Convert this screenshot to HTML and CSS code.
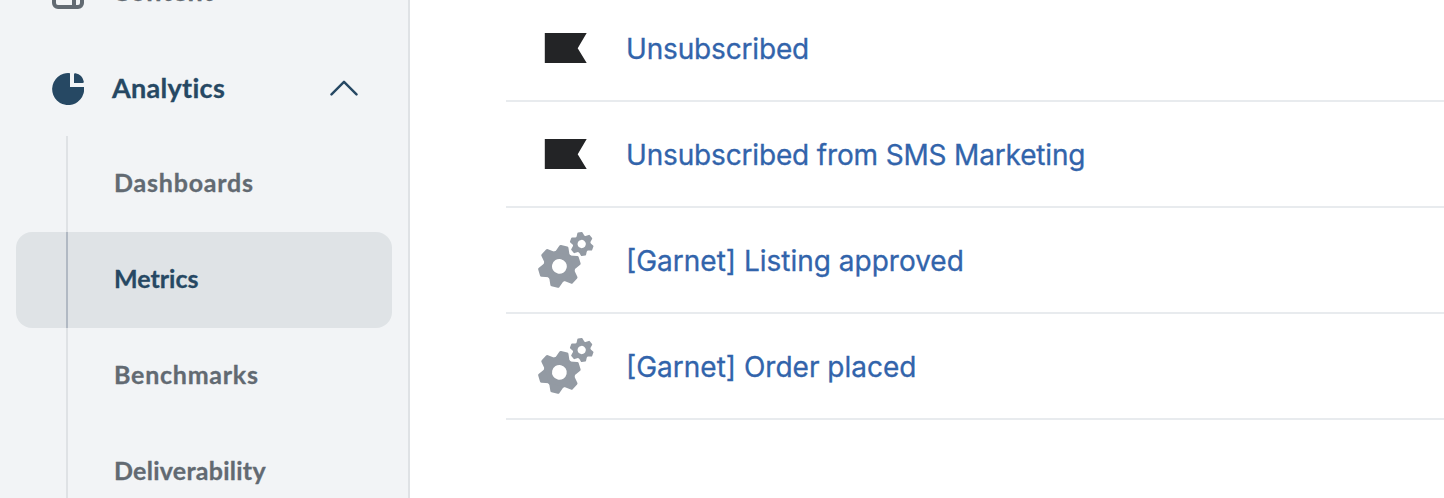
FILE: index.html
```
<!DOCTYPE html>
<html lang="en">
<head>
    <meta charset="UTF-8">
    <meta name="viewport" content="width=device-width, initial-scale=1.0">
    <title>Metrics</title>
    <link rel="stylesheet" href="styles.css">
</head>
<body>
    <!-- Shared icons -->
    <svg class="icon-defs" width="0" height="0">
        <symbol id="flag" viewBox="0 0 60 60">
            <path d="M8.8 15h41.9l-9 15.2 9 14.8H8.8z" fill="#232426"/>
        </symbol>
        <symbol id="gears" viewBox="0 0 60 60">
            <defs>
                <path id="tooth" d="M-7.5-13L-4.7-20Q-4.4-21.2-3.2-21.2H3.2Q4.4-21.2 4.7-20L7.5-13z"/>
                <g id="gear">
                    <circle r="11.6" fill="none" stroke="#939aa3" stroke-width="8.4"/>
                    <use href="#tooth"/>
                    <use href="#tooth" transform="rotate(60)"/>
                    <use href="#tooth" transform="rotate(120)"/>
                    <use href="#tooth" transform="rotate(180)"/>
                    <use href="#tooth" transform="rotate(240)"/>
                    <use href="#tooth" transform="rotate(300)"/>
                </g>
            </defs>
            <g fill="#939aa3">
                <use href="#gear" transform="translate(23.4 36.4) rotate(13)"/>
                <use href="#gear" transform="translate(45.7 14) rotate(-9) scale(.56)"/>
            </g>
        </symbol>
    </svg>

    <div class="page">
        <!-- Sidebar -->
        <nav class="sidebar">
            <a class="nav-item">
                <svg class="nav-icon" viewBox="0 0 32 32" fill="none" stroke="#626a72" stroke-width="4">
                    <rect x="2" y="2" width="28" height="28" rx="4"/>
                    <path d="M2 12h28M22 12v18"/>
                </svg>
                <span class="nav-label content">Content</span>
            </a>
            <a class="nav-item open">
                <svg class="nav-icon" viewBox="0 0 32 32" fill="#264863">
                    <path d="M18 0.2A16 16 0 1 0 32 14H18z"/>
                    <path d="M22 1.5Q22 0 23.5 0.3A10.5 10.5 0 0 1 31.8 8.5Q32 10 30.5 10H22z"/>
                </svg>
                <span class="nav-label">Analytics</span>
                <svg class="chevron" viewBox="0 0 28 16" fill="none" stroke="#264863" stroke-width="2.4" stroke-linecap="round" stroke-linejoin="round">
                    <path d="M1.5 14.4L14 1.8 26.5 14.4"/>
                </svg>
            </a>
            <div class="sub-menu">
                <a class="sub-item"><span class="dashboards">Dashboards</span></a>
                <a class="sub-item active"><span class="metrics">Metrics</span></a>
                <a class="sub-item"><span class="benchmarks">Benchmarks</span></a>
                <a class="sub-item"><span class="deliverability">Deliverability</span></a>
            </div>
        </nav>

        <!-- Metric list -->
        <main class="metric-list">
            <div class="metric">
                <svg class="metric-icon"><use href="#flag"/></svg>
                <a class="metric-name unsubscribed">Unsubscribed</a>
            </div>
            <div class="metric">
                <svg class="metric-icon"><use href="#flag"/></svg>
                <a class="metric-name unsubscribed">Unsubscribed from SMS Marketing</a>
            </div>
            <div class="metric">
                <svg class="metric-icon"><use href="#gears"/></svg>
                <a class="metric-name">[Garnet] Listing approved</a>
            </div>
            <div class="metric">
                <svg class="metric-icon"><use href="#gears"/></svg>
                <a class="metric-name">[Garnet] Order placed</a>
            </div>
        </main>
    </div>
</body>
</html>
```
FILE: styles.css
```
* {
    box-sizing: border-box;
}

body {
    margin: 0;
    background-color: #fff;
    font-family: Inter, sans-serif;
    overflow: hidden;
}

.icon-defs {
    display: block;
}

.page {
    display: flex;
    height: 498px;
    overflow: hidden;
}

/* Sidebar */
.sidebar {
    flex: none;
    width: 410px;
    height: 576px;
    margin-top: -56px;
    padding: 0 16px;
    background-color: #f2f4f6;
    border-right: 2px solid #dfe2e5;
    font-family: Lato, sans-serif;
    font-weight: 700;
    font-variant-ligatures: none;
    -webkit-text-stroke: 0.3px;
    color: #626a72;
}

.nav-item {
    display: flex;
    align-items: center;
    height: 96px;
    padding: 0 34px 0 36px;
    font-size: 27px;
}

.nav-item.open {
    color: #264863;
}

.nav-icon {
    width: 32px;
    height: 32px;
    margin-top: 1px;
    margin-right: 28px;
}

.nav-label {
    flex: 1;
    padding-bottom: 2px;
    letter-spacing: 0.3px;
}

.nav-label.content {
    padding-bottom: 4px;
    letter-spacing: 0.6px;
}

.chevron {
    width: 28px;
    height: 16px;
}

.sub-item {
    display: flex;
    height: 96px;
    width: 376px;
    padding-left: 50px;
    font-size: 25px;
    line-height: 93px;
}

.sub-item span {
    padding-left: 46px;
    border-left: 2px solid #dfe2e5;
}

.sub-item.active {
    background-color: #dfe3e6;
    border-radius: 16px;
    color: #264863;
}

.sub-item.active span {
    border-color: #b1b9c3;
}

.dashboards {
    letter-spacing: 0.8px;
}

.metrics {
    letter-spacing: 0;
}

.benchmarks {
    letter-spacing: 0.75px;
}

.deliverability {
    letter-spacing: 0.25px;
}

/* Metric list */
.metric-list {
    flex: 1;
    margin-top: -4px;
    padding-left: 96px;
}

.metric {
    display: flex;
    align-items: center;
    height: 106px;
    padding-left: 30px;
    border-bottom: 2px solid #e8ebee;
}

.metric-icon {
    width: 60px;
    height: 60px;
    margin-right: 30px;
}

.metric-name {
    padding-top: 2px;
    font-size: 28px;
    -webkit-text-stroke: 0.3px;
    color: #3264ab;
}

.metric-name.unsubscribed {
    letter-spacing: -0.16px;
}
```
